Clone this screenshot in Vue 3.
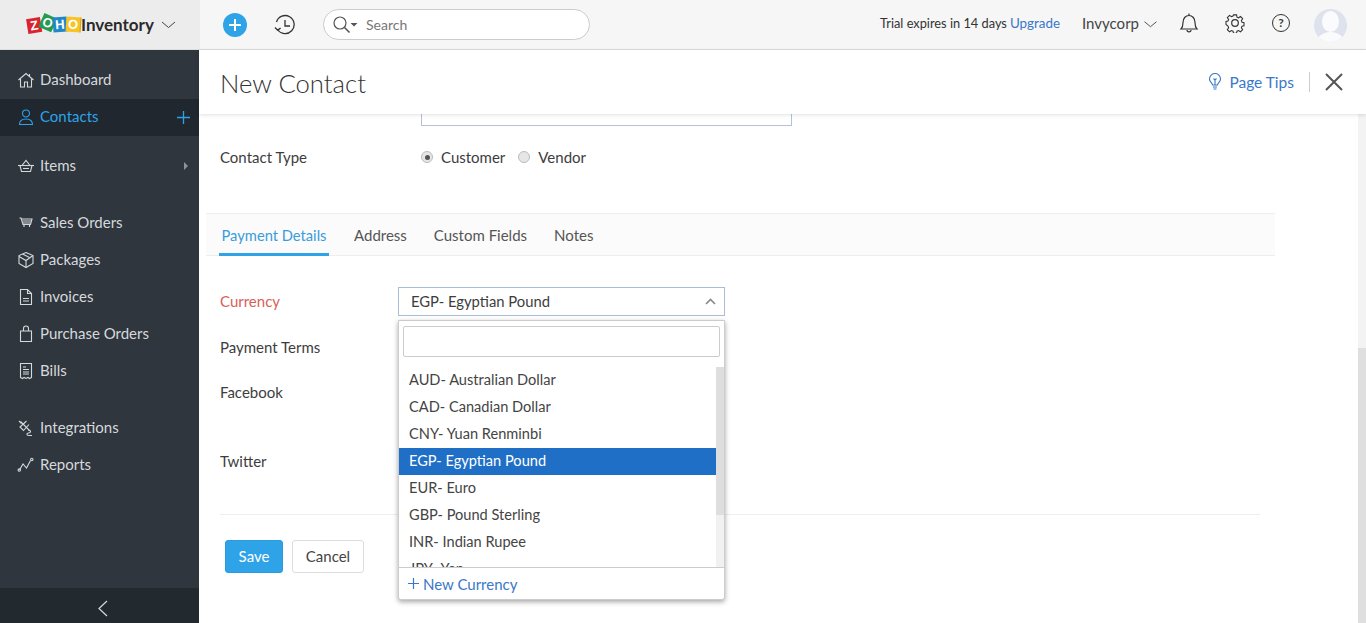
<template>
  <div class="app">
    <header class="topbar">
      <div class="brand">
        <div class="zoho">
          <span class="tile z">Z</span>
          <span class="tile o1">O</span>
          <span class="tile h">H</span>
          <span class="tile o2">O</span>
        </div>
        <span class="brand-name">Inventory</span>
        <svg class="brand-caret" width="15" height="8" viewBox="0 0 15 8"><path d="M1 1l6.500 5.500L14 1" fill="none" stroke="#444" stroke-width="1" /></svg>
      </div>
      <div class="top-left">
        <span class="add-btn">
          <svg width="14" height="14" viewBox="0 0 14 14"><path d="M7 1v12M1 7h12" stroke="#fff" stroke-width="2" /></svg>
        </span>
        <svg class="history" width="22" height="22" viewBox="0 0 22 22" fill="none" stroke="#333" stroke-width="1.300">
          <path d="M3.600 15.500A9 9 0 1 0 2.500 8" />
          <path d="M11 6v6h5" />
          <path d="M1 13.500l2.600 2.600 3-2" />
        </svg>
        <div class="search">
          <svg width="26" height="18" viewBox="0 0 26 18" fill="none" stroke="#555" stroke-width="1.200">
            <circle cx="7" cy="7" r="6" />
            <path d="M11.500 11.500l5 5" stroke-width="1.600" />
            <path d="M17.500 7h7l-3.500 3.500z" fill="#555" stroke="none" />
          </svg>
          <span class="search-text">Search</span>
        </div>
      </div>
      <div class="top-right">
        <span class="trial">Trial expires in 14 days</span>
        <a class="upgrade">Upgrade</a>
        <span class="org">Invycorp
          <svg width="13" height="7" viewBox="0 0 13 7"><path d="M.5.7l6 5 6-5" fill="none" stroke="#555" stroke-width="1" /></svg>
        </span>
        <svg class="t-icon" width="20" height="22" viewBox="0 0 20 22" fill="none" stroke="#333" stroke-width="1.200">
          <path d="M2 17c1.600-1.600 2-3 2-6.500C4 6.500 6.500 3.500 10 3.500s6 3 6 7c0 3.500.4 4.900 2 6.500z" />
          <path d="M10 1.500v2M8 18c0 2.500 4 2.500 4 0" />
        </svg>
        <svg class="t-icon gear" width="20" height="20" viewBox="0 0 20 20" fill="none" stroke="#333" stroke-width="1.200">
          <path d="M8.300 1h3.400l.5 2.500 1.700.7 2.200-1.400 2.400 2.400-1.400 2.200.7 1.700 2.200.5v3.400l-2.200.5-.7 1.700 1.400 2.200-2.400 2.400-2.200-1.400-1.700.7-.5 2.200H8.300l-.5-2.200-1.700-.7-2.200 1.400-2.400-2.400 1.400-2.200-.7-1.700L0 11.700V8.300l2.200-.5.7-1.700-1.400-2.200 2.400-2.400 2.200 1.400 1.700-.7z" transform="translate(1 1) scale(.9)" />
          <circle cx="10" cy="10" r="3.300" />
        </svg>
        <span class="help">?</span>
        <div class="avatar">
          <span class="avatar-head"></span>
          <span class="avatar-body"></span>
        </div>
      </div>
    </header>

    <div class="shell">
      <aside class="sidebar">
        <nav class="nav">
          <div v-for="(group, g) in nav" :key="g" class="nav-group">
            <a v-for="item in group" :key="item.label" class="nav-item" :class="{ active: item.active }">
              <svg class="nav-icon" width="18" height="18" viewBox="0 0 18 18" fill="none" stroke="currentColor" stroke-width="1.100">
                <path v-for="d in icons[item.icon]" :key="d" :d="d" />
              </svg>
              <span class="nav-label">{{ item.label }}</span>
              <svg v-if="item.active" class="nav-plus" width="13" height="13" viewBox="0 0 13 13"><path d="M6.500 0v13M0 6.500h13" stroke="#2ea3e8" stroke-width="1.300" /></svg>
              <span v-if="item.arrow" class="nav-arrow"></span>
            </a>
          </div>
        </nav>
        <div class="collapse">
          <svg width="11" height="17" viewBox="0 0 11 17"><path d="M10 1L2 8.500 10 16" fill="none" stroke="#d8d8d8" stroke-width="1.200" /></svg>
        </div>
      </aside>

      <main class="main">
        <div class="title-bar">
          <h1 class="title">New Contact</h1>
          <div class="title-actions">
            <svg width="14" height="18" viewBox="0 0 14 18" fill="none" stroke="#3a78c9" stroke-width="1.100">
              <path d="M4.500 12C4 9.500 1.500 9 1.500 6a5.500 5.500 0 0 1 11 0c0 3-2.500 3.500-3 6z" />
              <path d="M5 14h4M5.500 16h3M7 12V7L5.500 5.500M7 7l1.500-1.500" />
            </svg>
            <a class="tips">Page Tips</a>
            <span class="sep"></span>
            <svg width="20" height="20" viewBox="0 0 20 20"><path d="M2 2l16 16M18 2L2 18" stroke="#555" stroke-width="2" /></svg>
          </div>
        </div>

        <div class="body-row">
          <div class="form">
            <div class="clipped-input"></div>

            <div class="row contact-type">
              <label class="label">Contact Type</label>
              <div class="radios">
                <span class="radio on"></span><span class="radio-text">Customer</span>
                <span class="radio"></span><span class="radio-text">Vendor</span>
              </div>
            </div>

            <div class="tabs">
              <a v-for="(t, i) in tabs" :key="t" class="tab" :class="{ current: i === 0 }">{{ t }}</a>
            </div>

            <div class="fields">
              <div class="field currency">
                <label class="label-2 required">Currency</label>
                <div class="select-wrap">
                  <div class="select">
                    <span class="select-text">EGP- Egyptian Pound</span>
                    <svg width="11" height="7" viewBox="0 0 11 7"><path d="M1 6l4.500-4.500L10 6" fill="none" stroke="#888" stroke-width="1.600" /></svg>
                  </div>
                  <div class="dropdown">
                    <div class="dd-search"><div class="dd-input"></div></div>
                    <div class="dd-list-wrap">
                      <div class="dd-list">
                        <div v-for="c in currencies" :key="c" class="dd-item" :class="{ selected: c.startsWith('EGP') }">{{ c }}</div>
                      </div>
                      <div class="dd-scroll"><div class="dd-thumb"></div></div>
                    </div>
                    <div class="dd-foot">
                      <svg width="11" height="11" viewBox="0 0 11 11"><path d="M5.500 0v11M0 5.500h11" stroke="#3a78c9" stroke-width="1.200" /></svg>
                      <span>New Currency</span>
                    </div>
                  </div>
                </div>
              </div>
              <div class="field terms"><label class="label-2">Payment Terms</label></div>
              <div class="field facebook"><label class="label-2">Facebook</label></div>
              <div class="field twitter"><label class="label-2">Twitter</label></div>
            </div>

            <div class="divider"></div>

            <div class="buttons">
              <button class="btn save">Save</button>
              <button class="btn cancel">Cancel</button>
            </div>
          </div>
          <div class="page-scroll"><div class="page-thumb"></div></div>
        </div>
      </main>
    </div>
  </div>
</template>

<script setup>
const icons = {
  home: ['M1.500 9L9 2.500 16.500 9', 'M3.500 8v8h4v-5h3v5h4V8', 'M12.500 3v2.500'],
  user: ['M9 2a3.500 3.500 0 1 1 0 7 3.500 3.500 0 0 1 0-7z', 'M2.500 16.500c0-4 3-5.500 6.500-5.500s6.500 1.500 6.500 5.500z'],
  basket: ['M1 8.500h16', 'M3 8.500l1.500 6h9l1.500-6', 'M5 8.500L9 3.500l4 5', 'M6 11.500h6'],
  cart: ['M2.500 4h1.500l2 6.500h7.500L15 5H4.500', 'M5.500 7h8.500M6 9h7.500', 'M7 11v2M12.500 11v2'],
  box: ['M9 1.500l7 3v8l-7 4-7-4v-8z', 'M2 5.500l7 4 7-5M9 9.500v7', 'M5.500 3l7 3.500'],
  invoice: ['M3.500 1.500h7l4 4v11h-11z', 'M10.500 1.500v4h4', 'M6 10.500h6M6 13h6'],
  bag: ['M3.500 6h11v10.500h-11z', 'M6.500 6V3.500a2.500 2.500 0 0 1 5 0V6'],
  bill: ['M3.500 1.500h11v14l-1.800 1-1.800-1-1.900 1-1.900-1-1.800 1-1.800-1z', 'M6 5h3M6 7.500h6M6 10h6M6 12h6'],
  plug: ['M3.500 2.500l9 9', 'M9.500 2L3 8l3.500 3.500 5.500-6', 'M2 2l2.500 2.500', 'M11 11c3.500 0 3 3 .5 3-2 0-2.500 2.500.5 2.500h3'],
  chart: ['M2.500 14l3.500-6 3.500 4 4-7.500', 'M3.500 14a1.200 1.200 0 1 1-2.400 0 1.200 1.200 0 0 1 2.400 0z', 'M16 3.500a1.200 1.200 0 1 1-2.400 0 1.200 1.200 0 0 1 2.400 0z'],
}

const nav = [
  [
    { label: 'Dashboard', icon: 'home' },
    { label: 'Contacts', icon: 'user', active: true },
  ],
  [{ label: 'Items', icon: 'basket', arrow: true }],
  [
    { label: 'Sales Orders', icon: 'cart' },
    { label: 'Packages', icon: 'box' },
    { label: 'Invoices', icon: 'invoice' },
    { label: 'Purchase Orders', icon: 'bag' },
    { label: 'Bills', icon: 'bill' },
  ],
  [
    { label: 'Integrations', icon: 'plug' },
    { label: 'Reports', icon: 'chart' },
  ],
]

const tabs = ['Payment Details', 'Address', 'Custom Fields', 'Notes']

const currencies = [
  'AUD- Australian Dollar',
  'CAD- Canadian Dollar',
  'CNY- Yuan Renminbi',
  'EGP- Egyptian Pound',
  'EUR- Euro',
  'GBP- Pound Sterling',
  'INR- Indian Rupee',
  'JPY- Yen',
]
</script>

<style>
html, body { margin: 0; height: 100%; overflow: hidden; background: #fff; }
</style>

<style scoped>
.app {
  width: 1366px;
  height: 623px;
  display: flex;
  flex-direction: column;
  overflow: hidden;
  font-family: "Lato", "Open Sans", sans-serif;
  font-size: 15px;
  color: #3d3d3d;
}

/* top bar */
.topbar {
  height: 50px;
  flex: none;
  display: flex;
  align-items: center;
  box-sizing: border-box;
  background: #f6f6f6;
  border-bottom: 1px solid #ddd;
}
.brand {
  width: 200px;
  height: 49px;
  flex: none;
  display: flex;
  align-items: center;
  box-sizing: border-box;
  padding-left: 27px;
  background: #ececec;
}
.zoho { display: flex; width: 52px; }
.tile {
  width: 14px;
  height: 15px;
  flex: none;
  line-height: 15px;
  text-align: center;
  font-family: "Liberation Sans", sans-serif;
  font-size: 13px;
  font-weight: 700;
  color: #fff;
}
.tile.z { background: #d9232e; transform: rotate(-9deg) translateY(1px); }
.tile.o1 { background: #249b4e; transform: rotate(24deg) translateY(-2px); margin-left: -1px; }
.tile.h { background: #1e88c9; transform: rotate(-4deg); margin-left: -1px; }
.tile.o2 { background: #f7c325; border-right: 1px solid #e0a020; transform: rotate(4deg); margin-left: -1px; }
.brand-name { font-size: 17px; font-weight: 700; color: #2a2a2a; margin-left: 2px; }
.brand-caret { margin-left: 7px; }

.top-left { display: flex; align-items: center; margin-left: 23px; }
.add-btn {
  width: 24px;
  height: 24px;
  border-radius: 50%;
  background: #2ea3e8;
  display: flex;
  align-items: center;
  justify-content: center;
}
.history { margin-left: 27px; }
.search {
  width: 267px;
  height: 31px;
  margin-left: 27px;
  box-sizing: border-box;
  border: 1px solid #ccc;
  border-radius: 16px;
  background: #fff;
  display: flex;
  align-items: center;
  padding-left: 9px;
}
.search-text { margin-left: 7px; color: #777; font-size: 14px; }

.top-right {
  margin-left: auto;
  display: flex;
  align-items: center;
  padding: 0 19px 4px 0;
}
.trial { font-size: 12.800px; color: #333; }
.upgrade { color: #3a78c9; font-size: 13.400px; margin-left: 3px; }
.org { margin-left: 22px; font-size: 15px; color: #444; display: flex; align-items: center; gap: 5px; }
.org svg { margin-top: 3px; }
.t-icon { margin-left: 22px; }
.t-icon.gear { margin-left: 26px; }
.help {
  width: 18px;
  height: 18px;
  margin-left: 27px;
  border: 1.300px solid #333;
  border-radius: 50%;
  box-sizing: border-box;
  font-size: 12px;
  font-weight: 700;
  text-align: center;
  line-height: 15px;
}
.avatar {
  width: 33px;
  height: 33px;
  margin: 5px 0 0 24px;
  border-radius: 50%;
  background: #dde2ec;
  position: relative;
  overflow: hidden;
}
.avatar-head {
  position: absolute;
  left: 8px;
  top: 2px;
  width: 17px;
  height: 21px;
  border-radius: 50%;
  background: #fbfbfd;
}
.avatar-body {
  position: absolute;
  left: 3px;
  top: 23px;
  width: 27px;
  height: 20px;
  border-radius: 50%;
  background: #fbfbfd;
}

.shell { flex: 1; display: flex; min-height: 0; }

/* sidebar */
.sidebar {
  width: 199px;
  flex: none;
  display: flex;
  flex-direction: column;
  background: #2f363e;
}
.nav { flex: 1; padding-top: 12px; }
.nav-group { margin-bottom: 20px; }
.nav-group:first-child { margin-bottom: 12px; }
.nav-item {
  height: 37px;
  display: flex;
  align-items: center;
  padding-left: 17px;
  color: #d6d9dc;
  position: relative;
}
.nav-item.active { background: #20272e; color: #2ea3e8; }
.nav-label { margin-left: 5px; padding-bottom: 3px; }
.nav-icon { margin-bottom: 2px; }
.nav-plus { position: absolute; right: 9px; top: 12px; }
.nav-arrow {
  position: absolute;
  right: 11px;
  top: 14px;
  border-left: 4px solid #8d9297;
  border-top: 4px solid transparent;
  border-bottom: 4px solid transparent;
}
.collapse {
  height: 35px;
  flex: none;
  background: #22292f;
  display: flex;
  align-items: center;
  justify-content: center;
  padding: 6px 0 0 6px;
  box-sizing: border-box;
}

/* main */
.main { flex: 1; min-width: 0; display: flex; flex-direction: column; }
.title-bar {
  height: 64px;
  flex: none;
  display: flex;
  align-items: center;
  padding: 0 22px 0 21px;
  background: #fff;
  box-shadow: 0 1px 4px rgba(0, 0, 0, 0.12);
  position: relative;
  z-index: 2;
}
.title { margin: 2px 0 0; font-size: 25.700px; font-weight: 300; color: #333; }
.title-actions { margin-left: auto; display: flex; align-items: center; }
.tips { margin-left: 7px; color: #3a78c9; font-size: 15.500px; }
.sep { width: 1px; height: 20px; background: #ccc; margin: 0 14px 0 15px; }

.body-row { flex: 1; display: flex; min-height: 0; }
.form { flex: 1; min-width: 0; overflow: hidden; }
.clipped-input {
  width: 371px;
  height: 12px;
  margin-left: 222px;
  box-sizing: border-box;
  border: 1px solid #b4c1d6;
  border-top: none;
}
.row { display: flex; align-items: center; }
.contact-type { margin: 21px 0 0 21px; height: 20px; }
.label { width: 201px; padding-bottom: 1px; }
.radios { display: flex; align-items: center; }
.radio {
  width: 12px;
  height: 12px;
  border-radius: 50%;
  box-sizing: border-box;
  border: 1px solid #bbb;
  background: #e6e6e6;
  position: relative;
}
.radio.on::after {
  content: "";
  position: absolute;
  left: 2.500px;
  top: 2.500px;
  width: 5px;
  height: 5px;
  border-radius: 50%;
  background: #555;
}
.radio-text { margin: 0 13px 0 8px; padding-bottom: 1px; }

.tabs {
  margin: 46px 0 0 7px;
  width: 1069px;
  height: 43px;
  box-sizing: border-box;
  background: #fbfbfb;
  border-top: 1px solid #eee;
  border-bottom: 1px solid #eee;
  display: flex;
  padding-left: 13px;
  gap: 23px;
}
.tab {
  height: 42px;
  line-height: 42px;
  padding: 0 2px;
  box-sizing: border-box;
  color: #555;
}
.tab.current {
  width: 110px;
  padding: 0;
  text-align: center;
  font-size: 14.700px;
  color: #3a9bdc;
  border-bottom: 3px solid #2ea3e8;
}

.fields { padding-left: 21px; }
.field { display: flex; }
.label-2 { width: 178px; flex: none; padding-bottom: 1px; }
.required { color: #d8605a; }
.currency { margin-top: 31px; height: 29px; align-items: center; }
.terms { margin-top: 21px; height: 20px; align-items: center; }
.facebook { margin-top: 25px; height: 20px; align-items: center; }
.twitter { margin-top: 49px; height: 20px; align-items: center; }

.select-wrap { width: 327px; position: relative; }
.select {
  height: 29px;
  box-sizing: border-box;
  border: 1px solid #a9bcd8;
  display: flex;
  align-items: center;
  justify-content: space-between;
  padding: 0 8px 0 12px;
  background: #fff;
}
.select-text { font-size: 14.800px; padding-bottom: 1px; }
.dropdown {
  position: absolute;
  left: 0;
  top: 33px;
  width: 327px;
  height: 280px;
  box-sizing: border-box;
  background: #fff;
  border: 1px solid #ccc;
  border-radius: 0 0 3px 3px;
  box-shadow: 0 2px 5px rgba(0, 0, 0, 0.35);
  display: flex;
  flex-direction: column;
  z-index: 5;
}
.dd-search { padding: 5px 4px 10px; flex: none; }
.dd-input { height: 31px; box-sizing: border-box; border: 1px solid #ccc; border-radius: 2px; }
.dd-list-wrap { flex: 1; min-height: 0; display: flex; overflow: hidden; }
.dd-list { flex: 1; }
.dd-item { height: 27px; line-height: 26px; padding-left: 10px; color: #444; font-size: 14.600px; }
.dd-item.selected { background: #1f6fc6; color: #fff; }
.dd-scroll { width: 8px; background: #f1f1f1; }
.dd-thumb { height: 148px; background: #dedede; }
.dd-foot {
  height: 32px;
  flex: none;
  box-sizing: border-box;
  border-top: 1px solid #ccc;
  display: flex;
  align-items: center;
  gap: 4px;
  padding-left: 9px;
  color: #3a78c9;
}

.divider { margin: 43px 0 0 21px; width: 1040px; height: 1px; background: #eee; }
.buttons { display: flex; gap: 9px; margin: 25px 0 0 26px; }
.btn {
  height: 33px;
  box-sizing: border-box;
  border-radius: 3px;
  font: inherit;
  padding: 0 0 2px;
}
.save { width: 58px; background: #2ea3e8; border: 1px solid #2a9bdd; color: #fff; }
.cancel { width: 72px; background: #fff; border: 1px solid #ddd; color: #444; }

.page-scroll { width: 8px; flex: none; background: #f3f3f3; }
.page-thumb { height: 275px; margin-top: 234px; background: #dfdfdf; }
</style>
